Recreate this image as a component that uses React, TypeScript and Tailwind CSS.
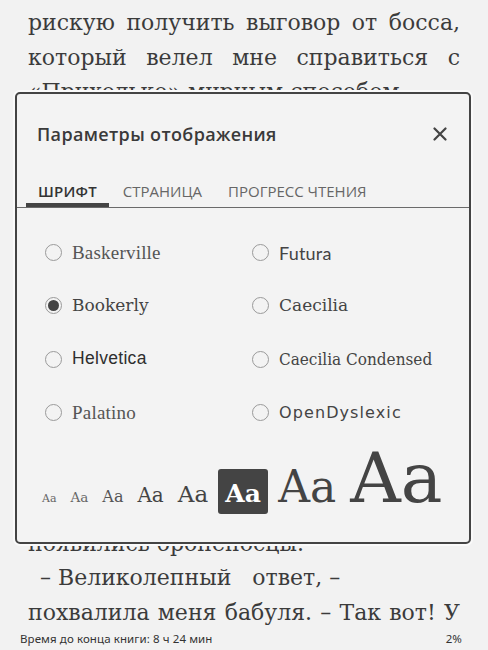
import React from 'react';

const serif = "font-['DejaVu_Serif','Liberation_Serif',serif]";

type Line = { text: string; justify?: boolean; indent?: boolean };

const topLines: Line[] = [
  { text: 'рискую получить выговор от босса,', justify: true },
  { text: 'который велел мне справиться с', justify: true },
  { text: '«Приходько» мирным способом.' },
];

const bottomLines: Line[] = [
  { text: 'появились броненосцы.' },
  { text: '– Великолепный   ответ, –', indent: true },
  { text: 'похвалила меня бабуля. – Так вот! У', justify: true },
];

const fonts = [
  { name: 'Baskerville', cls: "font-['Liberation_Serif',serif] text-[19px] text-[#555] tracking-[0.2px]" },
  { name: 'Futura', cls: "font-['Lato',sans-serif] text-[18px] text-[#444] tracking-[0.2px]" },
  { name: 'Bookerly', cls: "font-['DejaVu_Serif',serif] text-[17px] text-[#444]" },
  { name: 'Caecilia', cls: "font-['DejaVu_Serif',serif] text-[17px] text-[#444]" },
  { name: 'Helvetica', cls: "font-['Liberation_Sans',sans-serif] text-[17.5px] font-medium text-[#2e2e2e] tracking-[0.3px]" },
  { name: 'Caecilia Condensed', cls: "font-['DejaVu_Serif_Condensed','DejaVu_Serif',serif] text-[17px] text-[#444]" },
  { name: 'Palatino', cls: "font-['Liberation_Serif',serif] text-[19px] text-[#555] tracking-[0.2px]" },
  { name: 'OpenDyslexic', cls: "font-['DejaVu_Sans',sans-serif] text-[16px] text-[#444] tracking-[1.1px]" },
];

const sizes = [
  'text-[11px] text-[#666]',
  'text-[13.5px] text-[#666]',
  'text-[16px] text-[#555]',
  'text-[20px] text-[#444]',
  'text-[23px] text-[#444]',
  'selected',
  'text-[44px] text-[#444]',
  'text-[70px] text-[#444]',
];

function Radio({ checked }: { checked?: boolean }) {
  return (
    <span className="flex h-[17px] w-[17px] shrink-0 items-center justify-center rounded-full border border-[#9a9a9a]">
      {checked && <span className="h-[11px] w-[11px] rounded-full bg-[#444]" />}
    </span>
  );
}

function CloseIcon() {
  return (
    <svg width="14" height="14" viewBox="0 0 14 14" aria-hidden>
      <path d="M1.5 1.5 L12.5 12.5 M12.5 1.5 L1.5 12.5" stroke="#444" strokeWidth="2.2" strokeLinecap="round" />
    </svg>
  );
}

function BookLine({ l }: { l: Line }) {
  return (
    <div
      className={
        l.justify
          ? 'whitespace-pre text-justify [text-align-last:justify]'
          : l.indent
            ? 'whitespace-pre pl-[12px]'
            : 'whitespace-pre'
      }
    >
      {l.text}
    </div>
  );
}

function SettingsPanel() {
  return (
    <div className="absolute left-[15px] top-[92px] flex h-[452px] w-[456px] flex-col rounded-[5px] border-2 border-[#444] bg-[#f3f3f3] shadow-[0_0_0_2px_#fafafa]">
      {/* header */}
      <div className="flex items-center justify-between pl-[20px] pr-[22px] pt-[28px]">
        <span className="font-['Open_Sans',sans-serif] text-[18px] font-semibold leading-6 tracking-[0.35px] text-[#3a3a3a]">
          Параметры отображения
        </span>
        <CloseIcon />
      </div>

      {/* tabs */}
      <div className="mt-[35px] flex gap-[2px] border-b border-[#6a6a6a] pl-[9px] font-['Open_Sans',sans-serif] text-[15px] leading-5">
        <div className="flex flex-col">
          <span className="px-3 font-semibold tracking-[0.2px] text-[#333]">ШРИФТ</span>
          <div className="mt-[2px] h-[4px] bg-[#444]" />
        </div>
        <div className="flex flex-col">
          <span className="px-3 text-[#666]">СТРАНИЦА</span>
          <div className="mt-[2px] h-[4px]" />
        </div>
        <div className="flex flex-col">
          <span className="px-3 text-[#666]">ПРОГРЕСС ЧТЕНИЯ</span>
          <div className="mt-[2px] h-[4px]" />
        </div>
      </div>

      {/* font list */}
      <div className="mt-[18px] grid grid-cols-[207px_1fr] pl-[28px]">
        {fonts.map((f) => (
          <div key={f.name} className="flex h-[53.3px] items-center gap-[10px]">
            <Radio checked={f.name === 'Bookerly'} />
            <span className={`leading-none ${f.cls}`}>{f.name}</span>
          </div>
        ))}
      </div>

      {/* size row */}
      <div className={`mt-[4px] flex items-baseline gap-[14px] pl-[25px] ${serif}`}>
        {sizes.map((s, i) =>
          s === 'selected' ? (
            <div
              key={i}
              className="-mx-[4px] flex h-[45px] w-[50px] justify-center rounded-[3px] bg-[#444] pt-[12px] text-[25px] font-bold leading-none text-white"
            >
              Aa
            </div>
          ) : (
            <span key={i} className={`leading-none ${s}`}>
              Aa
            </span>
          ),
        )}
      </div>
    </div>
  );
}

export default function App() {
  return (
    <div className="relative flex h-[650px] w-[488px] flex-col overflow-hidden bg-[#f2f2f2] text-[#3b3b3b]">
      <div className={`px-[28px] pt-[6px] text-[22px] leading-[34.7px] ${serif}`}>
        {topLines.map((l, i) => (
          <BookLine key={i} l={l} />
        ))}
        {/* lines hidden under the settings panel */}
        <div className="h-[416.4px]" />
        {bottomLines.map((l, i) => (
          <BookLine key={i} l={l} />
        ))}
      </div>

      <div className="mt-auto flex justify-between px-[20px] pb-[3px] font-['Noto_Sans',sans-serif] text-[11.5px] leading-4 tracking-[0.1px] text-[#333]">
        <span>Время до конца книги: 8 ч 24 мин</span>
        <span className="pr-[6px]">2%</span>
      </div>

      <SettingsPanel />
    </div>
  );
}
